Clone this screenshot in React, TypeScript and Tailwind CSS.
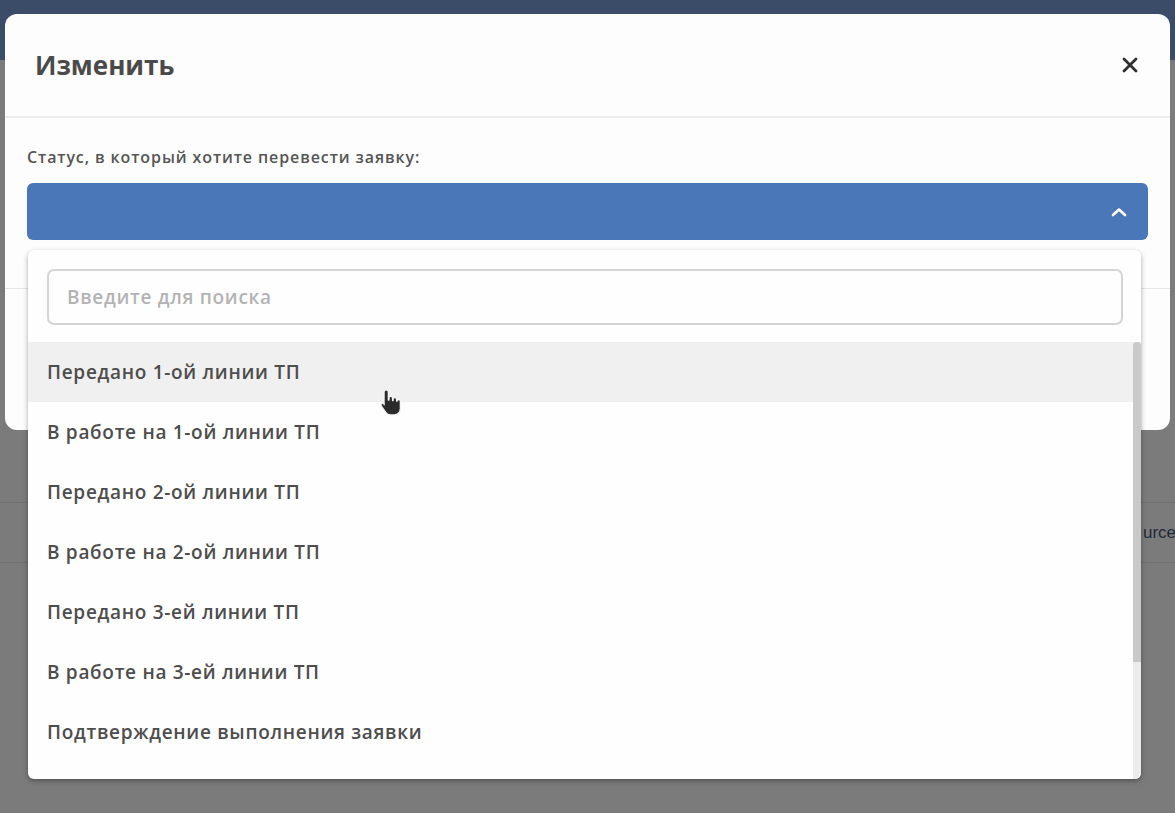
import React from 'react';

const statuses = [
  'Передано 1-ой линии ТП',
  'В работе на 1-ой линии ТП',
  'Передано 2-ой линии ТП',
  'В работе на 2-ой линии ТП',
  'Передано 3-ей линии ТП',
  'В работе на 3-ей линии ТП',
  'Подтверждение выполнения заявки',
];

const HandCursor: React.FC = () => (
  <svg width="24" height="30" viewBox="0 0 20 25" className="absolute left-[379px] top-[388px]">
    <path
      d="M6 1.5c1 0 1.8.8 1.8 1.8V10h.5V8.5c0-.9.7-1.5 1.5-1.5s1.5.6 1.5 1.5v2h.4v-1c0-.9.7-1.5 1.5-1.5s1.5.6 1.5 1.5V11h.3c0-.8.6-1.4 1.4-1.4s1.4.6 1.4 1.4V17c0 3-2 5.5-5 5.5H9.5c-1.6 0-3-.8-3.9-2.1L2 15c-.5-.7-.3-1.6.4-2.1.7-.4 1.5-.3 2 .3l-.2.8V3.3C4.2 2.3 5 1.5 6 1.5z"
      fill="#2b2b2b"
      stroke="#f5f5f5"
      strokeWidth="1.1"
      strokeLinejoin="round"
    />
  </svg>
);

export default function App() {
  return (
    <div className="relative w-[1175px] h-[813px] overflow-hidden bg-[#7b7b7b] font-['Open_Sans',sans-serif]">
      {/* page behind the overlay */}
      <div className="h-[60px] bg-[#3a4c67]" />
      <div className="h-[442px]" />
      <div className="border-t border-[#717171] h-[60px] flex items-center pl-[1143px]">
        <span className="text-[17px] text-[#1f2a38] font-['Liberation_Sans',sans-serif] whitespace-nowrap">urce</span>
      </div>
      <div className="border-t border-[#717171]" />

      {/* modal */}
      <div className="absolute left-[5px] top-[14px] w-[1165px] h-[416px] bg-[#fdfdfd] rounded-[12px] flex flex-col">
        <div className="h-[104px] flex items-center justify-between pl-[30px] pr-[32px] border-b-2 border-[#ececec]">
          <h2 className="text-[26px] font-bold text-[#4a4a4a]">Изменить</h2>
          <svg width="16" height="16" viewBox="0 0 16 16">
            <path d="M2 2L14 14M14 2L2 14" stroke="#2e2e2e" strokeWidth="2.8" strokeLinecap="round" />
          </svg>
        </div>
        <div className="pt-[27px] px-[22px] pb-[48px] border-b border-[#e6e6e6]">
          <p className="text-[16px] leading-[24px] text-[#555] font-semibold tracking-[0.9px]">
            Статус, в который хотите перевести заявку:
          </p>
          <div className="mt-[14px] h-[57px] rounded-[6px] bg-[#4a77b8] flex items-center justify-end pr-[21px]">
            <svg width="16" height="10" viewBox="0 0 16 10">
              <path d="M2 8L8 2.5L14 8" stroke="#ffffff" strokeWidth="2.6" fill="none" strokeLinecap="round" strokeLinejoin="round" />
            </svg>
          </div>
        </div>
        <div className="flex-1" />
      </div>

      {/* open dropdown */}
      <div className="absolute left-[28px] top-[250px] w-[1113px] h-[529px] bg-[#fefefe] rounded-[6px] shadow-[0_2px_5px_rgba(0,0,0,0.35)] flex flex-col overflow-hidden">
        <div className="pt-[19px] pl-[19px] pr-[18px] pb-[17px]">
          <div className="h-[56px] rounded-[7px] border-2 border-[#d4d4d4] flex items-center px-[18px]">
            <span className="text-[19px] font-semibold text-[#b3b3b3] tracking-[0.7px]">Введите для поиска</span>
          </div>
        </div>
        <div className="flex-1 flex min-h-0">
          <div className="flex-1">
            {statuses.map((s, i) => (
              <div
                key={s}
                className={`h-[60px] flex items-center pl-[19px] text-[19px] font-semibold text-[#4d4d4d] tracking-[0.7px] ${
                  i === 0 ? 'bg-[#f0f0f0]' : ''
                }`}
              >
                {s}
              </div>
            ))}
          </div>
          <div className="w-[8px] bg-[#ececec]">
            <div className="h-[320px] bg-[#c9c9c9] rounded-t-[4px]" />
          </div>
        </div>
      </div>

      <HandCursor />
    </div>
  );
}
